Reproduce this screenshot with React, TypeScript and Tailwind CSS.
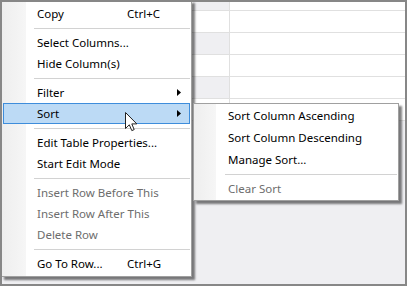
import { ReactNode } from 'react';

type Item =
    | { sep: true }
    | { sep?: false; label: string; shortcut?: string; sub?: boolean; active?: boolean; disabled?: boolean };

const mainItems: Item[] = [
    { label: 'Copy', shortcut: 'Ctrl+C' },
    { sep: true },
    { label: 'Select Columns...' },
    { label: 'Hide Column(s)' },
    { sep: true },
    { label: 'Filter', sub: true },
    { label: 'Sort', sub: true, active: true },
    { sep: true },
    { label: 'Edit Table Properties...' },
    { label: 'Start Edit Mode' },
    { sep: true },
    { label: 'Insert Row Before This', disabled: true },
    { label: 'Insert Row After This', disabled: true },
    { label: 'Delete Row', disabled: true },
    { sep: true },
    { label: 'Go To Row...', shortcut: 'Ctrl+G' },
];

const sortItems: Item[] = [
    { label: 'Sort Column Ascending' },
    { label: 'Sort Column Descending' },
    { label: 'Manage Sort...' },
    { sep: true },
    { label: 'Clear Sort', disabled: true },
];

function Arrow() {
    return (
        <svg width="4" height="7" viewBox="0 0 4 7" className="block">
            <path d="M0 0 L4 3.5 L0 7 Z" fill="#000" />
        </svg>
    );
}

function Cursor() {
    return (
        <svg width="13" height="20" viewBox="0 0 13 20" className="block">
            <path
                d="M0.5 0.5 L0.5 16.5 L4.3 12.8 L6.8 18.6 L9.2 17.6 L6.8 11.9 L11.8 11.9 Z"
                fill="#fff"
                stroke="#222"
                strokeWidth="1"
                strokeLinejoin="miter"
            />
        </svg>
    );
}

function MainRow({ item }: { item: Item }): ReactNode {
    if (item.sep) {
        return (
            <div className="h-[8px] pt-[4px] pl-[31px]">
                <div className="h-px bg-[#d2d2d2]" />
            </div>
        );
    }
    return (
        <div
            className={
                'flex items-center h-[21px] pl-[33px] pr-[8px] border ' +
                (item.active ? 'bg-[#bcdaf5] border-[#3e8ddb]' : 'border-transparent') +
                (item.disabled ? ' text-[#6d6d6d]' : ' text-black')
            }
        >
            <span className="w-[90px] whitespace-nowrap">{item.label}</span>
            <span className="flex-1 whitespace-nowrap">{item.shortcut}</span>
            {item.sub && <Arrow />}
        </div>
    );
}

function SubRow({ item }: { item: Item }): ReactNode {
    if (item.sep) {
        return (
            <div className="h-[7px] pt-[3px] pl-[30px]">
                <div className="h-px bg-[#d2d2d2]" />
            </div>
        );
    }
    return (
        <div
            className={
                'flex items-center h-[22px] pl-[33px] whitespace-nowrap ' +
                (item.disabled ? 'text-[#6d6d6d]' : 'text-black')
            }
        >
            {item.label}
        </div>
    );
}

function GridRow({ idx }: { idx: number }) {
    const shade = idx % 2 === 0 ? 'bg-[#efeff2]' : 'bg-white';
    return (
        <div className={'flex border-b border-[#e0e0e0] ' + (idx === 0 ? 'h-[9px]' : 'h-[22px]')}>
            <div className="w-[191px] bg-white" />
            <div className={'w-[36px] ' + shade} />
            <div className="flex-1 bg-white border-l border-[#e0e0e0]" />
        </div>
    );
}

export default function App() {
    return (
        <div
            className="relative w-[407px] h-[286px] border-2 border-[#878787] bg-[#efeff2] overflow-hidden text-[11.5px] leading-none"
            style={{ fontFamily: '"Noto Sans", "Open Sans", sans-serif' }}
        >
            <div className="flex flex-col">
                {[0, 1, 2, 3, 4, 5].map((i) => (
                    <GridRow key={i} idx={i} />
                ))}
            </div>

            {/* context menu */}
            <div className="absolute left-[-1px] top-[-2px] w-[191px] border border-[#a0a0a0] p-[2px] pl-px pr-px bg-[linear-gradient(to_right,#eeeeee_0px,#f6f6f6_24px,#ffffff_24px)] shadow-[3px_3px_2px_rgba(0,0,0,0.5)]">
                {mainItems.map((it, i) => (
                    <MainRow key={i} item={it} />
                ))}
            </div>

            {/* sort submenu */}
            <div className="absolute left-[191px] top-[101px] w-[206px] border border-[#a0a0a0] pt-px px-px bg-[linear-gradient(to_right,#eeeeee_0px,#f6f6f6_22px,#ffffff_22px)] shadow-[3px_3px_2px_rgba(0,0,0,0.5)]">
                {sortItems.map((it, i) => (
                    <SubRow key={i} item={it} />
                ))}
            </div>

            <div className="absolute left-[123px] top-[110px]">
                <Cursor />
            </div>
        </div>
    );
}
